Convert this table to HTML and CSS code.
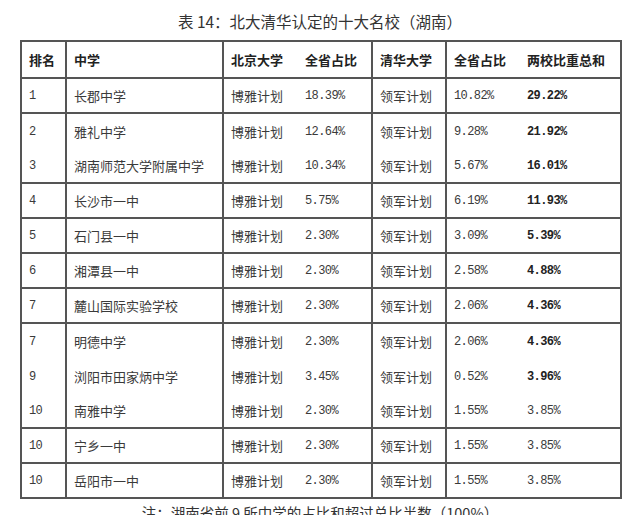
FILE: index.html
```html
<!DOCTYPE html>
<html lang="zh">
<head>
<meta charset="utf-8">
<link rel="stylesheet" href="styles.css">
</head>
<body>
<div class="page">
  <div class="title">表 14：北大清华认定的十大名校（湖南）</div>
  <table class="grid">
    <colgroup>
      <col class="c1"><col class="c2"><col class="c3"><col class="c4"><col class="c5"><col class="c6"><col class="c7">
    </colgroup>
    <thead>
      <tr><th>排名</th><th>中学</th><th>北京大学</th><th>全省占比</th><th>清华大学</th><th>全省占比</th><th>两校比重总和</th></tr>
    </thead>
    <tbody>
      <tr><td class="num">1</td><td>长郡中学</td><td>博雅计划</td><td class="num">18.39%</td><td>领军计划</td><td class="num">10.82%</td><td class="num b">29.22%</td></tr>
      <tr class="nb"><td class="num">2</td><td>雅礼中学</td><td>博雅计划</td><td class="num">12.64%</td><td>领军计划</td><td class="num">9.28%</td><td class="num b">21.92%</td></tr>
      <tr><td class="num">3</td><td>湖南师范大学附属中学</td><td>博雅计划</td><td class="num">10.34%</td><td>领军计划</td><td class="num">5.67%</td><td class="num b">16.01%</td></tr>
      <tr><td class="num">4</td><td>长沙市一中</td><td>博雅计划</td><td class="num">5.75%</td><td>领军计划</td><td class="num">6.19%</td><td class="num b">11.93%</td></tr>
      <tr><td class="num">5</td><td>石门县一中</td><td>博雅计划</td><td class="num">2.30%</td><td>领军计划</td><td class="num">3.09%</td><td class="num b">5.39%</td></tr>
      <tr><td class="num">6</td><td>湘潭县一中</td><td>博雅计划</td><td class="num">2.30%</td><td>领军计划</td><td class="num">2.58%</td><td class="num b">4.88%</td></tr>
      <tr><td class="num">7</td><td>麓山国际实验学校</td><td>博雅计划</td><td class="num">2.30%</td><td>领军计划</td><td class="num">2.06%</td><td class="num b">4.36%</td></tr>
      <tr class="nb"><td class="num">7</td><td>明德中学</td><td>博雅计划</td><td class="num">2.30%</td><td>领军计划</td><td class="num">2.06%</td><td class="num b">4.36%</td></tr>
      <tr class="nb"><td class="num">9</td><td>浏阳市田家炳中学</td><td>博雅计划</td><td class="num">3.45%</td><td>领军计划</td><td class="num">0.52%</td><td class="num b">3.96%</td></tr>
      <tr><td class="num">10</td><td>南雅中学</td><td>博雅计划</td><td class="num">2.30%</td><td>领军计划</td><td class="num">1.55%</td><td class="num">3.85%</td></tr>
      <tr><td class="num">10</td><td>宁乡一中</td><td>博雅计划</td><td class="num">2.30%</td><td>领军计划</td><td class="num">1.55%</td><td class="num">3.85%</td></tr>
      <tr><td class="num">10</td><td>岳阳市一中</td><td>博雅计划</td><td class="num">2.30%</td><td>领军计划</td><td class="num">1.55%</td><td class="num">3.85%</td></tr>
    </tbody>
  </table>
  <div class="note">注：湖南省前 9 所中学的占比和超过总比半数（100%）</div>
</div>
</body>
</html>
```

FILE: styles.css
```css
html, body {
  margin: 0;
  padding: 0;
  background: #fff;
}
body {
  width: 640px;
  height: 515px;
  overflow: hidden;
  font-family: "Noto Sans CJK SC", "Noto Sans", sans-serif;
  color: #333;
}
.page {
  display: flex;
  flex-direction: column;
  align-items: flex-start;
}
.title {
  align-self: stretch;
  height: 40px;
  display: flex;
  align-items: center;
  justify-content: center;
  font-size: 15.5px;
  color: #333;
  padding-top: 1px;
  box-sizing: border-box;
}
.grid {
  margin-left: 20px;
  border-collapse: collapse;
  table-layout: fixed;
  width: 602px;
  border: 2px solid #555;
}
.c1 { width: 45px; }
.c2 { width: 157px; }
.c3 { width: 75px; }
.c4 { width: 74px; }
.c5 { width: 74px; }
.c6 { width: 74px; }
.c7 { width: 101px; }
.grid th, .grid td {
  padding: 0 0 0 7px;
  text-align: left;
  font-size: 13px;
  white-space: nowrap;
  overflow: hidden;
}
.grid th {
  height: 35px;
  font-weight: 700;
  color: #222;
  border-bottom: 2px solid #555;
}
.grid td {
  height: 33px;
  font-weight: 400;
  color: #3a3a3a;
  border-bottom: 2px solid #555;
}
.grid tr.nb td {
  border-bottom: none;
  height: 35px;
}
.grid th:nth-child(2), .grid td:nth-child(2),
.grid th:nth-child(3), .grid td:nth-child(3),
.grid th:nth-child(5), .grid td:nth-child(5),
.grid th:nth-child(6), .grid td:nth-child(6) {
  border-left: 2px solid #555;
}
.grid td.num {
  font-family: "Liberation Mono", "DejaVu Sans Mono", monospace;
  font-size: 12px;
  letter-spacing: -0.6px;
}
.grid td.b {
  font-weight: 700;
  color: #222;
}
.note {
  align-self: stretch;
  text-align: center;
  font-size: 14.5px;
  color: #333;
  padding-top: 2px;
  line-height: 24px;
}
```
